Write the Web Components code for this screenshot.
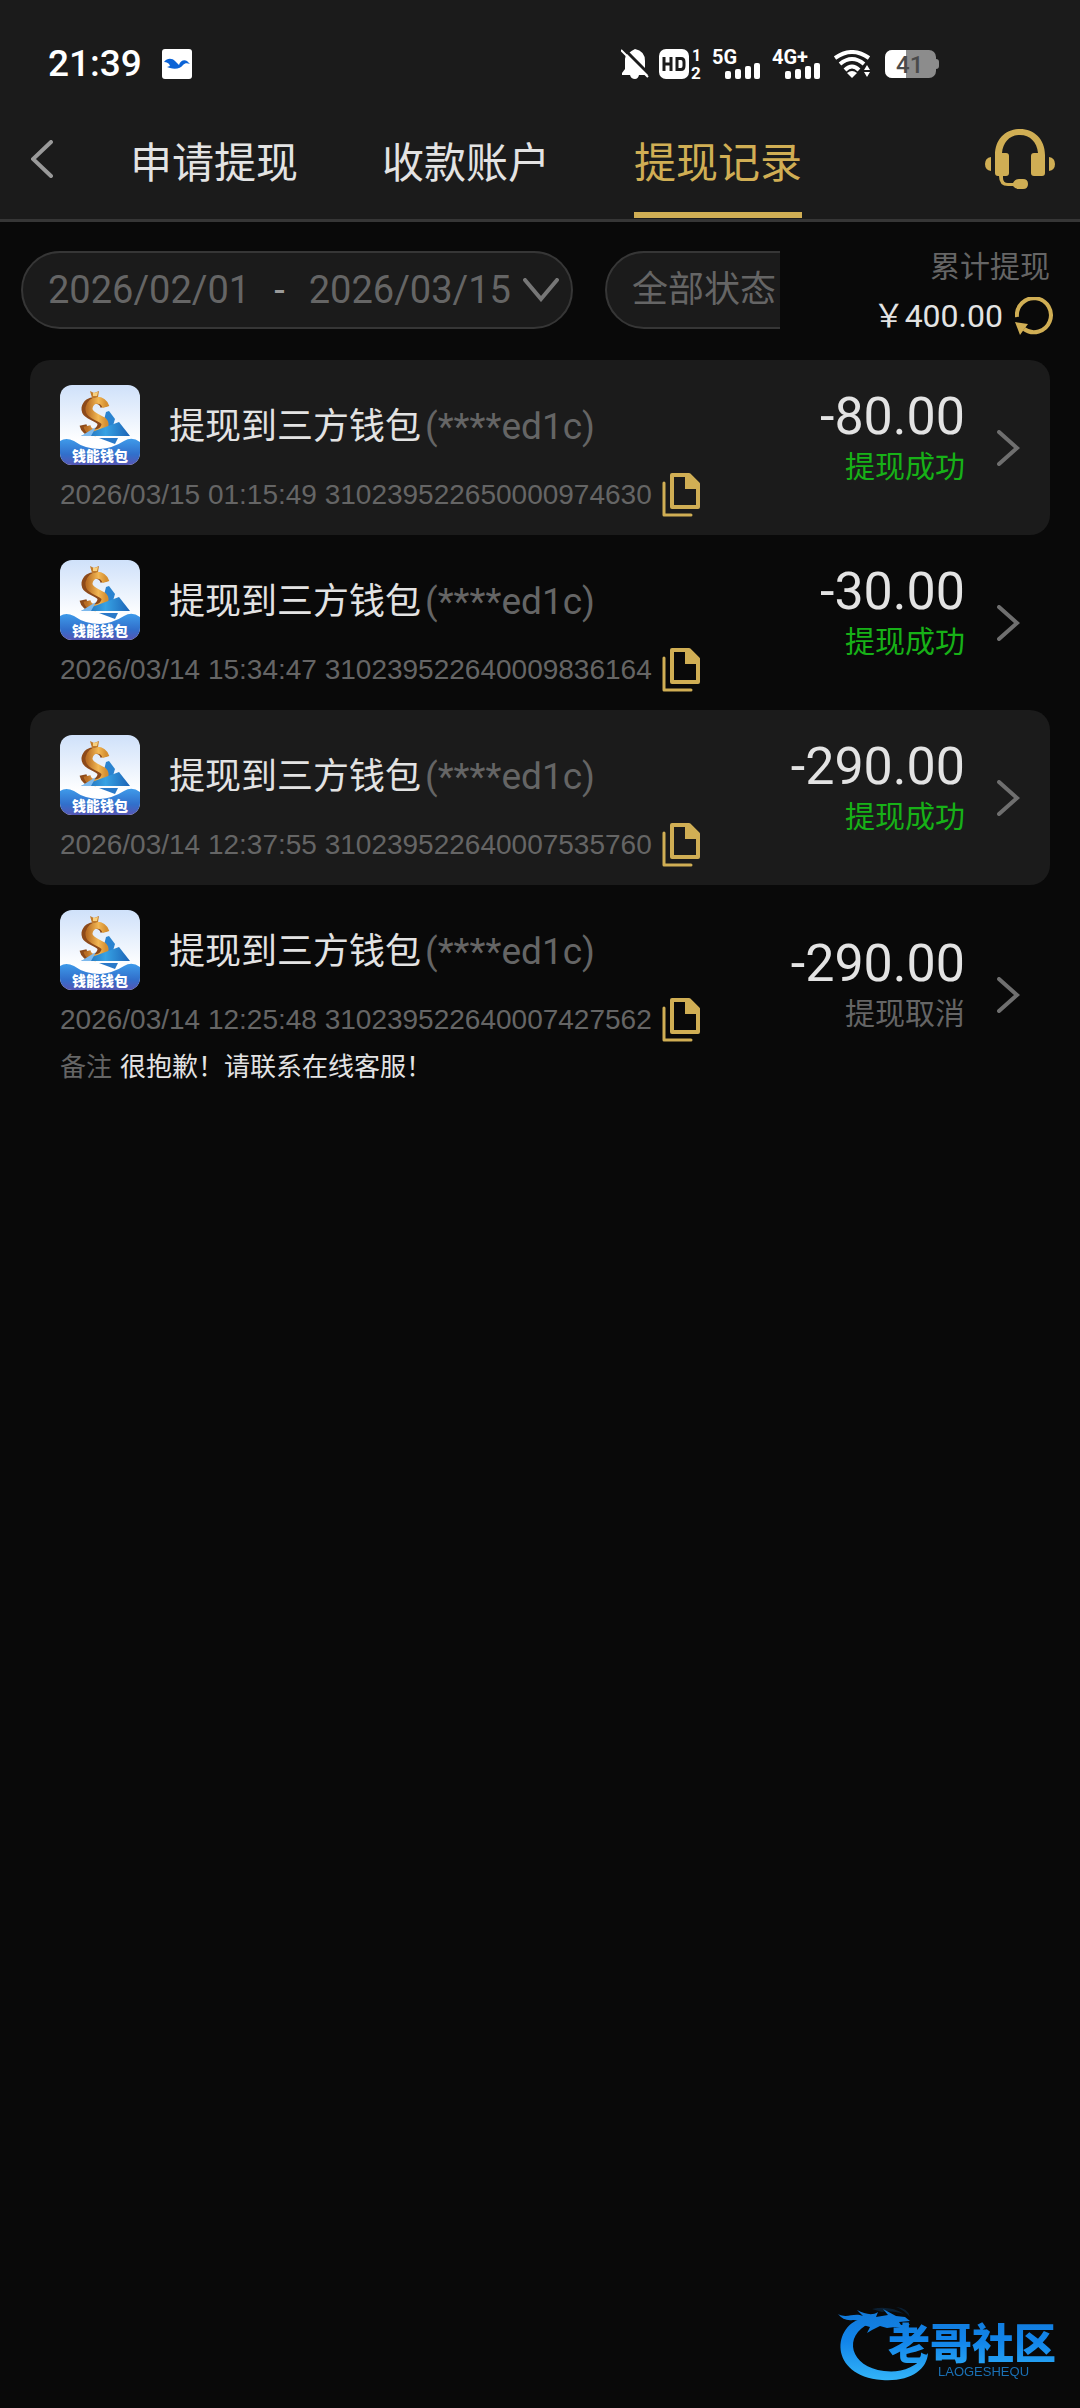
<!DOCTYPE html>
<html lang="zh-CN">
<head>
<meta charset="utf-8">
<meta name="viewport" content="width=device-width, initial-scale=1">
<title>提现记录</title>
<style>
  body {
    margin: 0;
    min-height: 100vh;
    background: #090909;
    color: #e3e3e3;
    font-family: Roboto, "Noto Sans CJK SC", sans-serif;
    --gold: #d0ae54;
    --panel: #1b1b1b;
    --line: #363636;
    --muted: #656565;
    --ok: #17b117;
  }
</style>
</head>
<body>
<withdraw-page>
  <withdraw-record time="2026/03/15 01:15:49" order="310239522650000974630" amount="-80.00" status="提现成功" account="(****ed1c)" done shaded>提现到三方钱包</withdraw-record>
  <withdraw-record time="2026/03/14 15:34:47" order="310239522640009836164" amount="-30.00" status="提现成功" account="(****ed1c)" done>提现到三方钱包</withdraw-record>
  <withdraw-record time="2026/03/14 12:37:55" order="310239522640007535760" amount="-290.00" status="提现成功" account="(****ed1c)" done shaded>提现到三方钱包</withdraw-record>
  <withdraw-record time="2026/03/14 12:25:48" order="310239522640007427562" amount="-290.00" status="提现取消" account="(****ed1c)" remark="很抱歉！请联系在线客服！">提现到三方钱包</withdraw-record>
</withdraw-page>

<script>
const resetCss = `
  :host, * { box-sizing: border-box; }
  svg { display: block; }
  button, select {
    margin: 0;
    padding: 0;
    border: 0;
    background: none;
    color: inherit;
    font: inherit;
    appearance: none;
    cursor: pointer;
  }
`;

class StatusBar extends HTMLElement {
  constructor() {
    super();
    this.attachShadow({ mode: "open" });
    this.shadowRoot.innerHTML = `
      <style>
        ${resetCss}
        :host {
          display: flex;
          align-items: center;
          height: 100px;
          padding: 28px 140px 0 48px;
          color: #fff;
        }
        .time { font-size: 37px; font-weight: 500; line-height: 44px; }
        .app { margin-left: 20px; }
        .icons { display: flex; align-items: center; gap: 10px; margin-left: auto; }
        .icons .wifi { margin: 0 4px 0 2px; }
        text { font-family: Roboto, sans-serif; font-weight: 700; }
      </style>
      <span class="time">21:39</span>
      <svg class="app" width="30" height="30" viewBox="0 0 30 30">
        <rect width="30" height="30" rx="3" fill="#fff"/>
        <path fill="#0b63d6" d="M2 13C5 9 10 9 13 12L17 16C18 12 22 10 25 12L28 15C25 14 23 14 21 16C19 19 14 21 8 19L5 18L8 17C7 14 5 13 2 13Z"/>
      </svg>
      <div class="icons">
        <svg width="28" height="30" viewBox="0 0 28 30">
          <path fill="#fff" d="M8 4Q10 2 14 0Q24 2 24 12V20L27 24V26H18Q17 30 14 30Q10 30 9 26H1V24L4 20V10Q4 7 6 5Z"/>
          <path stroke="#1b1b1b" stroke-width="3" d="M3 0L28 25"/>
          <path stroke="#fff" stroke-width="2" d="M0 1L27 28"/>
        </svg>
        <svg width="43" height="42" viewBox="0 -6 43 42">
          <rect width="30" height="30" rx="7" fill="#fff"/>
          <g fill="none" stroke="#1b1b1b" stroke-width="3"><path d="M5 8V22M12 8V22M5 15H12M18 9.500V20.500H22Q25 20.500 25 17V13Q25 9.500 22 9.500Z"/></g>
          <text x="33" y="12" font-size="16" fill="#fff">1</text>
          <text x="32" y="30" font-size="17" fill="#fff">2</text>
        </svg>
        <svg width="50" height="42" viewBox="0 -6 50 42" fill="#fff">
          <text x="0" y="15" font-size="20">5G</text>
          <rect x="13" y="22" width="6" height="8" rx="2"/><rect x="23" y="20" width="6" height="10" rx="2"/>
          <rect x="33" y="17" width="6" height="13" rx="2"/><rect x="42" y="14" width="6" height="16" rx="2"/>
        </svg>
        <svg width="50" height="42" viewBox="0 -6 50 42" fill="#fff">
          <text x="0" y="15" font-size="20">4G+</text>
          <rect x="13" y="22" width="6" height="8" rx="2"/><rect x="23" y="20" width="6" height="10" rx="2"/>
          <rect x="33" y="17" width="6" height="13" rx="2"/><rect x="42" y="14" width="6" height="16" rx="2"/>
        </svg>
        <svg class="wifi" width="37" height="28" viewBox="0 0 37 28">
          <g fill="none" stroke="#fff" stroke-width="4">
            <path d="M1 8Q18 -4 35 8"/><path d="M6 14Q18 4 30 14"/><path d="M11 20Q18 13 25 20"/>
          </g>
          <path fill="#fff" d="M13 23Q18 19 23 23L18 28Z"/>
          <path fill="#1b1b1b" d="M33 12L37 15V28H28V18Z"/>
          <path fill="#fff" d="M30 20L33 15L36 20ZM30 22H36L33 27Z"/>
        </svg>
        <svg width="55" height="28" viewBox="0 0 55 28">
          <defs><clipPath id="cell"><rect width="51" height="28" rx="7"/></clipPath></defs>
          <g clip-path="url(#cell)"><rect width="51" height="28" fill="#8c8c8c"/><rect width="21" height="28" fill="#fff"/></g>
          <path fill="#8c8c8c" d="M51 9Q54 9 54 12V16Q54 19 51 19Z"/>
          <text x="11" y="23" font-size="24" fill="#4a4a4a" style="font-weight:500">41</text>
        </svg>
      </div>
    `;
  }
}

class TabNav extends HTMLElement {
  constructor() {
    super();
    this.attachShadow({ mode: "open" });
    this.shadowRoot.innerHTML = `
      <style>
        ${resetCss}
        :host {
          display: flex;
          align-items: center;
          height: 122px;
          padding: 0 25px 1px 31px;
          border-bottom: 3px solid var(--line);
        }
        nav { display: flex; gap: 84px; margin-left: 77px; align-self: stretch; }
        a {
          display: flex;
          align-items: center;
          border: solid transparent;
          border-width: 6px 0;
          color: inherit;
          font-size: 42px;
          text-decoration: none;
          white-space: nowrap;
        }
        a[aria-current] { color: var(--gold); border-bottom-color: var(--gold); }
        .service { margin-left: auto; color: var(--gold); }
      </style>
      <button aria-label="返回">
        <svg width="22" height="38" viewBox="0 0 22 38" fill="none" stroke="#9a9a9a" stroke-width="4" stroke-linecap="round"><path d="M20 2L2 19L20 36"/></svg>
      </button>
      <nav>
        <a href="#apply">申请提现</a>
        <a href="#account">收款账户</a>
        <a href="#records" aria-current="page">提现记录</a>
      </nav>
      <button class="service" aria-label="客服">
        <svg width="70" height="60" viewBox="0 0 70 60" fill="currentColor">
          <path d="M10 26C10 10 21 0 35 0C49 0 60 10 60 26V44Q60 47 57 47H49Q46 47 46 44V27Q46 24 49 24H53C52 13 45 6 35 6C25 6 18 13 17 24H21Q24 24 24 27V44Q24 47 21 47H18V49Q18 54 23 54H28Q30 50 34 50H38Q43 50 43 55Q43 60 38 60H34Q30 60 28 57H23Q14 57 14 47H13Q10 47 10 44Z"/>
          <path d="M6 28V42Q0 41 0 35Q0 29 6 28ZM64 28V42Q70 41 70 35Q70 29 64 28Z"/>
        </svg>
      </button>
    `;
  }
}

class FilterBar extends HTMLElement {
  constructor() {
    super();
    this.attachShadow({ mode: "open" });
    this.shadowRoot.innerHTML = `
      <style>
        ${resetCss}
        :host { display: flex; padding: 24px 27px 20px 21px; }
        .pills { display: flex; align-items: flex-start; gap: 32px; flex: 1; min-width: 0; overflow: hidden; padding-top: 5px; }
        .pill {
          flex: none;
          display: flex;
          align-items: center;
          height: 78px;
          padding: 0 12px 0 25px;
          border: 2px solid var(--line);
          border-radius: 39px;
          background: var(--panel);
          color: var(--muted);
          font-size: 38px;
          white-space: nowrap;
        }
        .dash { margin: 0 24px; color: #9a9a9a; }
        .pill svg { margin-left: 12px; }
        select.pill { width: 240px; font-size: 36px; }
        .total { width: 273px; padding-top: 2px; display: flex; flex-direction: column; align-items: flex-end; }
        .label { padding-right: 3px; color: var(--muted); font-size: 30px; line-height: 38px; }
        .sum { display: flex; align-items: center; gap: 12px; font-size: 32px; line-height: 48px; margin-top: 6px; }
      </style>
      <div class="pills">
        <button class="pill">
          <span>2026/02/01</span><span class="dash">-</span><span>2026/03/15</span>
          <svg width="36" height="24" viewBox="0 0 36 24" fill="none" stroke="#777" stroke-width="4" stroke-linecap="round"><path d="M2 2L18 21L34 2"/></svg>
        </button>
        <select class="pill" aria-label="状态"><option>全部状态</option></select>
      </div>
      <div class="total">
        <span class="label">累计提现</span>
        <span class="sum">
          <span>￥400.00</span>
          <button aria-label="刷新">
            <svg width="38" height="38" viewBox="0 0 38 38">
              <path fill="none" stroke="#d0ae54" stroke-width="4" d="M2 20A17 17 0 1 1 9 32"/>
              <path fill="#d0ae54" d="M0 25L13 27L10 31L5 38Z"/>
            </svg>
          </button>
        </span>
      </div>
    `;
  }
}

class WalletLogo extends HTMLElement {
  constructor() {
    super();
    this.attachShadow({ mode: "open" });
    this.shadowRoot.innerHTML = `
      <style>
        :host { display: block; width: 80px; height: 80px; border-radius: 12px; overflow: hidden; }
        svg { display: block; }
        text { font-family: "Noto Sans CJK SC", sans-serif; font-weight: 900; font-size: 14px; }
      </style>
      <svg width="80" height="80" viewBox="0 0 80 80">
        <defs>
          <linearGradient id="sky" x2="0" y2="1"><stop stop-color="#cfe1fa"/><stop offset=".7" stop-color="#fff"/></linearGradient>
          <linearGradient id="sea" x2="0" y2="1"><stop stop-color="#3f9bea"/><stop offset=".6" stop-color="#316fcb"/><stop offset="1" stop-color="#5657b5"/></linearGradient>
          <linearGradient id="sail" x2="1"><stop stop-color="#1b5fae"/><stop offset=".5" stop-color="#37a2e4"/><stop offset="1" stop-color="#1c63b6"/></linearGradient>
          <linearGradient id="coin" x2="1"><stop stop-color="#b96e24"/><stop offset=".6" stop-color="#f3b855"/><stop offset="1" stop-color="#d58f31"/></linearGradient>
        </defs>
        <rect width="80" height="80" fill="url(#sky)"/>
        <path fill="#2a83d0" d="M46 27L49 26L55 34L52 44L41 47Z"/>
        <path fill="none" stroke="#8d4a1a" stroke-width="7" d="M44 22C42 13 27 13 25 23C24 33 42 32 41 40C39 50 25 50 23 40"/>
        <path fill="none" stroke="url(#coin)" stroke-width="7" d="M46 22C43 13 31 13 29 23C28 33 46 32 45 40C43 50 29 50 27 41"/>
        <path fill="#c27c2c" d="M30 6L34 8L39 6L38 12L32 13Z"/>
        <path fill="#f8d07e" d="M33 8L38 7L37 11H33Z"/>
        <path fill="url(#sail)" d="M21 51L59 37L70 51Z"/>
        <path fill="#7db9ed" d="M21 51L36 42L31 51Z"/>
        <path fill="#2a79c9" d="M39 53H58L55 59Z"/>
        <path fill="url(#sea)" d="M0 56Q6 52 14 56Q25 64 40 64Q53 63 64 56Q72 51 80 57V80H0Z"/>
        <text x="12" y="76" fill="#fff">钱能钱包</text>
      </svg>
    `;
  }
}

class WithdrawRecord extends HTMLElement {
  constructor() {
    super();
    this.attachShadow({ mode: "open" });
  }

  connectedCallback() {
    const get = (name) => this.getAttribute(name) || "";
    const remark = get("remark");
    this.shadowRoot.innerHTML = `
      <style>
        ${resetCss}
        :host {
          display: flex;
          align-items: center;
          padding: 0 30px;
          border-radius: 20px;
        }
        :host([shaded]) { background: var(--panel); }
        .main { flex: 1; min-width: 0; padding: 25px 0 18px; }
        .title { display: flex; align-items: center; font-size: 36px; line-height: 48px; }
        .title wallet-logo { margin-right: 29px; }
        .label { padding-top: 4px; }
        .account { color: var(--muted); padding-left: 4px; font-size: 37px; }
        .meta {
          display: flex;
          align-items: center;
          gap: 10px;
          height: 44px;
          margin-top: 8px;
          color: var(--muted);
          font-size: 28px;
          font-family: "Liberation Sans", sans-serif;
          white-space: nowrap;
        }
        .remark { margin-top: 6px; font-size: 26px; line-height: 38px; }
        .remark span { color: var(--muted); margin-right: 8px; }
        .result { padding-bottom: 22px; text-align: right; }
        .amount { font-size: 52px; line-height: 60px; }
        .status { font-size: 30px; line-height: 40px; color: var(--muted); }
        :host([done]) .status { color: var(--ok); }
        .more { margin-left: 32px; }
      </style>
      <div class="main">
        <div class="title">
          <wallet-logo></wallet-logo>
          <div class="label"><slot></slot><span class="account">${get("account")}</span></div>
        </div>
        <div class="meta">
          <span>${get("time")} ${get("order")}</span>
          <button aria-label="复制">
            <svg width="38" height="44" viewBox="0 0 38 44">
              <path fill="none" stroke="#d0ae54" stroke-width="3" stroke-linejoin="round" stroke-linecap="round" d="M2 10V42H29"/>
              <path fill="none" stroke="#d0ae54" stroke-width="4" stroke-linejoin="round" d="M10 2H27L36 11V34H10Z"/>
              <path fill="#d0ae54" d="M23 1H28L38 11V16H23Z"/>
            </svg>
          </button>
        </div>
        ${remark ? `<div class="remark"><span>备注</span>${remark}</div>` : ""}
      </div>
      <div class="result">
        <div class="amount">${get("amount")}</div>
        <div class="status">${get("status")}</div>
      </div>
      <button class="more" aria-label="详情">
        <svg width="23" height="36" viewBox="0 0 23 36" fill="none" stroke="#6f6f6f" stroke-width="4" stroke-linecap="round"><path d="M2 2L20 18L2 34"/></svg>
      </button>
    `;
  }
}

class CommunityMark extends HTMLElement {
  constructor() {
    super();
    this.attachShadow({ mode: "open" });
    this.shadowRoot.innerHTML = `
      <style>
        :host { display: block; position: fixed; right: 0; bottom: 0; pointer-events: none; }
        svg { display: block; }
        .name { font: 900 42px "Noto Sans CJK SC", sans-serif; }
        .latin { font: 13px "Liberation Sans", sans-serif; }
      </style>
      <svg width="260" height="118" viewBox="0 0 260 118">
        <defs>
          <linearGradient id="blue" gradientUnits="userSpaceOnUse" x1="0" y1="20" x2="0" y2="90"><stop stop-color="#1178d8"/><stop offset=".45" stop-color="#1285ea"/><stop offset="1" stop-color="#33b4f8"/></linearGradient>
        </defs>
        <g fill="url(#blue)">
          <path d="M44 28C12 34 8 86 62 90C90 92 107 80 108 63C95 79 79 83 64 81C30 77 22 46 50 33Z"/>
          <path d="M18 24C27 29 34 22 43 26L37 20C45 24 52 26 58 22L56 27L68 25L63 19L76 26L85 27L90 31L79 32L81 35L90 34L85 39L75 37L67 38L60 36L52 40L47 43L50 37L43 35L46 31L33 30C27 31 22 29 18 24Z"/>
          <path opacity=".2" d="M52 19Q70 15 84 24Q70 20 62 22ZM76 17Q88 18 90 27Q84 20 76 17Z"/>
          <text class="name" x="68" y="69">老哥社区</text>
        </g>
        <text class="latin" x="118" y="86" fill="#1a70b4">LAOGESHEQU</text>
      </svg>
    `;
  }
}

class WithdrawPage extends HTMLElement {
  constructor() {
    super();
    this.attachShadow({ mode: "open" });
    this.shadowRoot.innerHTML = `
      <style>
        :host { display: block; }
        header { background: var(--panel); }
        main { display: flex; flex-direction: column; padding: 0 30px; }
      </style>
      <header>
        <status-bar></status-bar>
        <tab-nav></tab-nav>
      </header>
      <filter-bar></filter-bar>
      <main><slot></slot></main>
      <community-mark></community-mark>
    `;
  }
}

customElements.define("status-bar", StatusBar);
customElements.define("tab-nav", TabNav);
customElements.define("filter-bar", FilterBar);
customElements.define("wallet-logo", WalletLogo);
customElements.define("withdraw-record", WithdrawRecord);
customElements.define("community-mark", CommunityMark);
customElements.define("withdraw-page", WithdrawPage);
</script>
</body>
</html>
